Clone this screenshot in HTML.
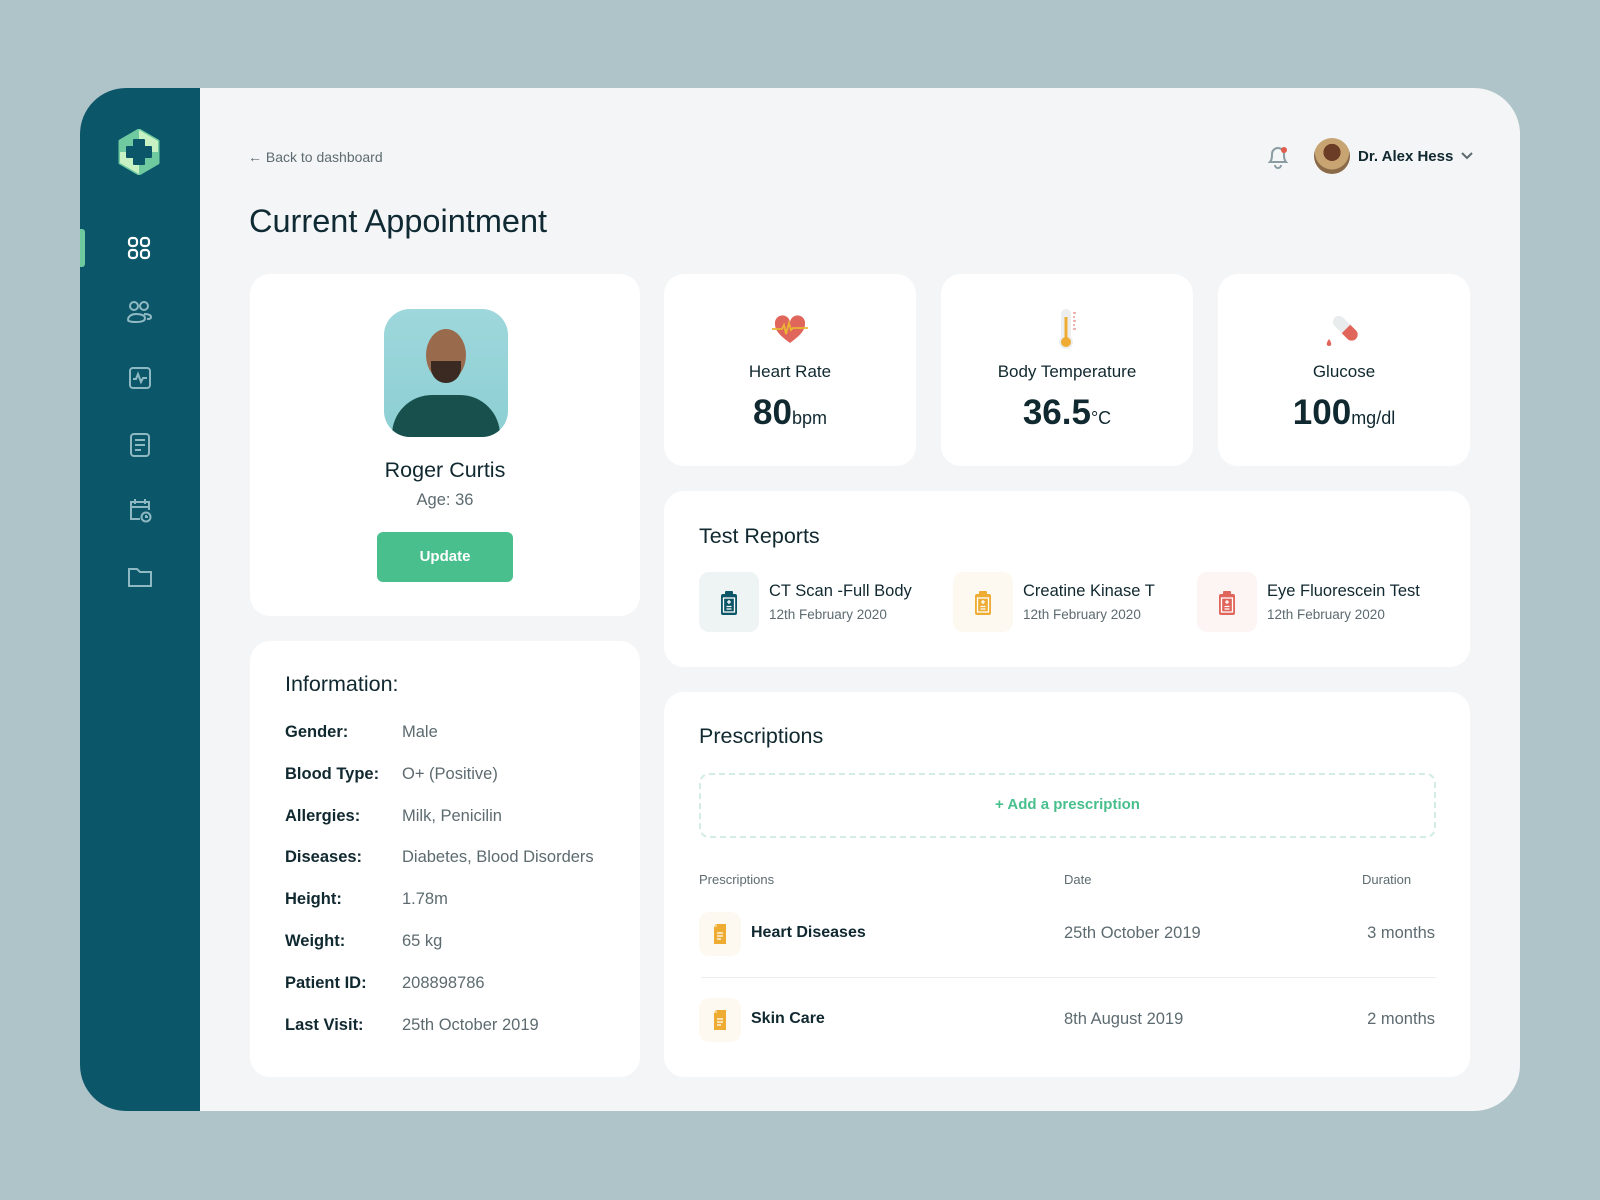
<!DOCTYPE html>
<html><head><meta charset="utf-8"><style>
*{margin:0;padding:0;box-sizing:border-box}
body{width:1600px;height:1200px;background:#afc4c8;font-family:"Liberation Sans",sans-serif;color:#10282f;position:relative;overflow:hidden}
.a{position:absolute}
.t{position:absolute;white-space:nowrap;line-height:1}
.frame{left:80px;top:88px;width:1440px;height:1023px;background:#f4f5f7;border-radius:46px;overflow:hidden}
.side{left:80px;top:88px;width:120px;height:1023px;background:#0c5669;border-radius:46px 0 0 46px}
.card{position:absolute;background:#fff;border-radius:20px}
.g{color:#5d6b70}
.b{font-weight:bold}
.ico{position:absolute;width:60px;height:60px;border-radius:10px}
</style></head><body>
<div class="a frame"></div>
<div class="a side"></div>
<svg class="a" style="left:116px;top:129px" width="46" height="46" viewBox="0 0 46 46">
<path d="M23 1 L42 12 L42 34 L23 45 L4 34 L4 12 Z" fill="#6fcaa0" stroke="#6fcaa0" stroke-width="3" stroke-linejoin="round"/>
<path d="M23 1 L42 12 L42 23 L23 23 Z" fill="#c8f1c4"/>
<path d="M4 23 L23 23 L23 45 L4 34 Z" fill="#c8f1c4"/>
<path d="M18 11h10v7h7v10h-7v7h-10v-7h-7v-10h7z" fill="#0c5669" stroke="#0c5669" stroke-width="2" stroke-linejoin="round"/>
</svg>
<div class="a" style="left:80px;top:229px;width:5px;height:38px;background:#6fcaa0;border-radius:0 3px 3px 0"></div>
<svg class="a" style="left:126px;top:236px" width="26" height="24" viewBox="0 0 26 24" fill="none" stroke="#fff" stroke-width="2.2"><rect x="3" y="2" width="8" height="8" rx="3"/><rect x="15" y="2" width="8" height="8" rx="3"/><rect x="3" y="14" width="8" height="8" rx="3"/><rect x="15" y="14" width="8" height="8" rx="3"/></svg>
<svg class="a" style="left:126px;top:300px" width="28" height="24" viewBox="0 0 28 24" fill="none" stroke="#8fb9c2" stroke-width="2"><circle cx="8" cy="6" r="4"/><circle cx="18" cy="6" r="4"/><path d="M2 20c0-4 4-6 8-6s9 1 9 4-3 4-9 4-8-1-8-2z"/><path d="M18 14c4 0 7 1 7 3s-2 2-4 2"/></svg>
<svg class="a" style="left:128px;top:366px" width="24" height="24" viewBox="0 0 24 24" fill="none" stroke="#8fb9c2" stroke-width="2"><rect x="2" y="2" width="20" height="20" rx="3"/><path d="M5 13h3l2-5 3 8 2-4h4"/></svg>
<svg class="a" style="left:129px;top:432px" width="22" height="26" viewBox="0 0 22 26" fill="none" stroke="#8fb9c2" stroke-width="2"><rect x="2" y="2" width="18" height="22" rx="3"/><path d="M6 8h10M6 13h10M6 18h6"/></svg>
<svg class="a" style="left:127px;top:497px" width="26" height="26" viewBox="0 0 26 26" fill="none" stroke="#8fb9c2" stroke-width="2"><path d="M13 22H4V5h18v8"/><path d="M4 10h18M8 2v5M18 2v5"/><circle cx="19" cy="20" r="4.5"/><path d="M19 18v2h2"/></svg>
<svg class="a" style="left:127px;top:565px" width="26" height="24" viewBox="0 0 26 24" fill="none" stroke="#8fb9c2" stroke-width="2"><path d="M2 4h8l3 3h11v14H2z"/></svg>

<div class="t g" style="left:248px;top:150px;font-size:14px">&#8592; Back to dashboard</div>
<div class="t" style="left:249px;top:205px;font-size:32.5px;color:#0f2a33">Current Appointment</div>

<svg class="a" style="left:1265px;top:143px" width="26" height="28" viewBox="0 0 26 28" fill="none" stroke="#8a9da2" stroke-width="2"><path d="M5 19c2-2 2-5 2-8a6 6 0 0 1 12 0c0 3 0 6 2 8z"/><path d="M10 22a3 3 0 0 0 6 0"/><circle cx="19" cy="7" r="3" fill="#e05c4d" stroke="none"/></svg>
<div class="a" style="left:1314px;top:138px;width:36px;height:36px;border-radius:50%;background:radial-gradient(circle at 50% 40%,#6b3d26 0 30%,#c7a472 31% 60%,#8b6a4a 61%)"></div>
<div class="t b" style="left:1358px;top:149px;font-size:15px">Dr. Alex Hess</div>
<svg class="a" style="left:1461px;top:152px" width="12" height="8" viewBox="0 0 12 8" fill="none" stroke="#5d6b70" stroke-width="2"><path d="M1 1l5 5 5-5"/></svg>

<div class="card" style="left:250px;top:274px;width:390px;height:342px"></div>
<div class="a" style="left:384px;top:309px;width:124px;height:128px;border-radius:26px;background:linear-gradient(#9ed7dc,#8ccfd3);overflow:hidden">
<div class="a" style="left:42px;top:20px;width:40px;height:52px;border-radius:50%;background:#9a6a4d"></div>
<div class="a" style="left:47px;top:52px;width:30px;height:22px;border-radius:0 0 15px 15px;background:#3a2a22"></div>
<div class="a" style="left:8px;top:86px;width:108px;height:60px;border-radius:40px 40px 0 0;background:#17504c"></div>
</div>
<div class="t" style="left:250px;width:390px;text-align:center;top:460px;font-size:21.5px">Roger Curtis</div>
<div class="t g" style="left:250px;width:390px;text-align:center;top:492px;font-size:16.5px">Age: 36</div>
<div class="a b" style="left:377px;top:532px;width:136px;height:50px;background:#48bf8c;border-radius:6px;color:#fff;font-size:15px;text-align:center;line-height:50px">Update</div>

<div class="card" style="left:250px;top:641px;width:390px;height:436px"></div>
<div class="t" style="left:285px;top:674px;font-size:21.5px">Information:</div>
<div style="position:absolute;left:285px;top:712px;font-size:16.5px;line-height:41.8px">
<div><span class="b" style="display:inline-block;width:117px">Gender:</span><span class="g">Male</span></div>
<div><span class="b" style="display:inline-block;width:117px">Blood Type:</span><span class="g">O+ (Positive)</span></div>
<div><span class="b" style="display:inline-block;width:117px">Allergies:</span><span class="g">Milk, Penicilin</span></div>
<div><span class="b" style="display:inline-block;width:117px">Diseases:</span><span class="g">Diabetes, Blood Disorders</span></div>
<div><span class="b" style="display:inline-block;width:117px">Height:</span><span class="g">1.78m</span></div>
<div><span class="b" style="display:inline-block;width:117px">Weight:</span><span class="g">65 kg</span></div>
<div><span class="b" style="display:inline-block;width:117px">Patient ID:</span><span class="g">208898786</span></div>
<div><span class="b" style="display:inline-block;width:117px">Last Visit:</span><span class="g">25th October 2019</span></div>
</div>

<div class="card" style="left:664px;top:274px;width:252px;height:192px"></div>
<div class="card" style="left:941px;top:274px;width:252px;height:192px"></div>
<div class="card" style="left:1218px;top:274px;width:252px;height:192px"></div>
<svg class="a" style="left:771px;top:313px" width="38" height="32" viewBox="0 0 38 32"><path d="M19 30C8 22 4 17 4 11a7.5 7.5 0 0 1 15-2 7.5 7.5 0 0 1 15 2c0 6-4 11-15 19z" fill="#e0655a"/><path d="M1 16h10l2-4 2 9 3-11 2 7 2-2h15" fill="none" stroke="#e9b534" stroke-width="1.8"/></svg>
<svg class="a" style="left:1055px;top:308px" width="24" height="42" viewBox="0 0 24 42"><rect x="6" y="1" width="10" height="32" rx="5" fill="#eceeef"/><circle cx="11" cy="34" r="7" fill="#eceeef"/><rect x="9.5" y="9" width="3" height="22" fill="#eeac33"/><circle cx="11" cy="34" r="5" fill="#eeac33"/><path d="M18 5h3M18 9h2M18 13h3M18 17h2M18 21h3" stroke="#e06a60" stroke-width="1"/></svg>
<svg class="a" style="left:1324px;top:311px" width="40" height="38" viewBox="0 0 40 38"><g transform="rotate(-45 22 18)"><rect x="16" y="2" width="12" height="30" rx="6" fill="#e9ecec"/><path d="M16 18h12v8a6 6 0 0 1-12 0z" fill="#e0655a"/></g><path d="M5 28c-3 4-3 7 0 7s3-3 0-7z" fill="#e0655a"/></svg>
<div class="t" style="left:664px;width:252px;text-align:center;top:363px;font-size:17px">Heart Rate</div>
<div class="t" style="left:941px;width:252px;text-align:center;top:363px;font-size:17px">Body Temperature</div>
<div class="t" style="left:1218px;width:252px;text-align:center;top:363px;font-size:17px">Glucose</div>
<div class="t b" style="left:664px;width:252px;text-align:center;top:395px;font-size:35px">80<span style="font-size:18px;font-weight:normal">bpm</span></div>
<div class="t b" style="left:941px;width:252px;text-align:center;top:395px;font-size:35px">36.5<span style="font-size:18px;font-weight:normal">°C</span></div>
<div class="t b" style="left:1218px;width:252px;text-align:center;top:395px;font-size:35px">100<span style="font-size:18px;font-weight:normal">mg/dl</span></div>

<div class="card" style="left:664px;top:491px;width:806px;height:176px"></div>
<div class="t" style="left:699px;top:526px;font-size:21.5px">Test Reports</div>
<div class="ico" style="left:699px;top:572px;background:#eef3f4"></div>
<div class="ico" style="left:953px;top:572px;background:#fdf9f1"></div>
<div class="ico" style="left:1197px;top:572px;background:#fcf5f4"></div>
<svg class="a" style="left:718px;top:590px" width="22" height="26" viewBox="0 0 22 26"><rect x="3" y="4" width="16" height="21" rx="2" fill="#0c5669"/><rect x="7" y="1" width="8" height="5" rx="1" fill="#0c5669"/><rect x="5.5" y="8" width="11" height="14" fill="none" stroke="#fff" stroke-width="1.3"/><path d="M11 10v4M9 12h4M8.5 16.5h5M8.5 19h5" stroke="#fff" stroke-width="1.3"/></svg>
<svg class="a" style="left:972px;top:590px" width="22" height="26" viewBox="0 0 22 26"><rect x="3" y="4" width="16" height="21" rx="2" fill="#eeac33"/><rect x="7" y="1" width="8" height="5" rx="1" fill="#eeac33"/><rect x="5.5" y="8" width="11" height="14" fill="none" stroke="#fff" stroke-width="1.3"/><path d="M11 10v4M9 12h4M8.5 16.5h5M8.5 19h5" stroke="#fff" stroke-width="1.3"/></svg>
<svg class="a" style="left:1216px;top:590px" width="22" height="26" viewBox="0 0 22 26"><rect x="3" y="4" width="16" height="21" rx="2" fill="#e0655a"/><rect x="7" y="1" width="8" height="5" rx="1" fill="#e0655a"/><rect x="5.5" y="8" width="11" height="14" fill="none" stroke="#fff" stroke-width="1.3"/><path d="M11 10v4M9 12h4M8.5 16.5h5M8.5 19h5" stroke="#fff" stroke-width="1.3"/></svg>
<div class="t" style="left:769px;top:583px;font-size:16.5px">CT Scan -Full Body</div>
<div class="t g" style="left:769px;top:608px;font-size:13.5px">12th February 2020</div>
<div class="t" style="left:1023px;top:583px;font-size:16.5px">Creatine Kinase T</div>
<div class="t g" style="left:1023px;top:608px;font-size:13.5px">12th February 2020</div>
<div class="t" style="left:1267px;top:583px;font-size:16.5px">Eye Fluorescein Test</div>
<div class="t g" style="left:1267px;top:608px;font-size:13.5px">12th February 2020</div>

<div class="card" style="left:664px;top:692px;width:806px;height:385px"></div>
<div class="t" style="left:699px;top:726px;font-size:21.5px">Prescriptions</div>
<div class="a" style="left:699px;top:773px;width:737px;height:65px;border:2px dashed #d3ece4;border-radius:10px"></div>
<div class="t b" style="left:699px;width:737px;text-align:center;top:797px;font-size:15px;color:#48bf8c">+ Add a prescription</div>
<div class="t g" style="left:699px;top:873px;font-size:13px">Prescriptions</div>
<div class="t g" style="left:1064px;top:873px;font-size:13px">Date</div>
<div class="t g" style="left:1362px;top:873px;font-size:13px">Duration</div>
<div class="ico" style="left:699px;top:912px;width:42px;height:44px;background:#fdf9f1"></div>
<div class="ico" style="left:699px;top:998px;width:42px;height:44px;background:#fdf9f1"></div>
<svg class="a" style="left:712px;top:923px" width="16" height="22" viewBox="0 0 16 22"><path d="M4 1h10v20H2V4z" fill="#eeac33"/><path d="M2 4h3V1z" fill="#f7d48a"/><path d="M5 10h6M5 13h6M5 16h4" stroke="#fff" stroke-width="1.2"/></svg>
<svg class="a" style="left:712px;top:1009px" width="16" height="22" viewBox="0 0 16 22"><path d="M4 1h10v20H2V4z" fill="#eeac33"/><path d="M2 4h3V1z" fill="#f7d48a"/><path d="M5 10h6M5 13h6M5 16h4" stroke="#fff" stroke-width="1.2"/></svg>
<div class="t b" style="left:751px;top:925px;font-size:16px">Heart Diseases</div>
<div class="t g" style="left:1064px;top:925px;font-size:16.5px">25th October 2019</div>
<div class="t g" style="right:165px;top:925px;font-size:16.5px">3 months</div>
<div class="a" style="left:701px;top:977px;width:735px;height:1px;background:#ebeeef"></div>
<div class="t b" style="left:751px;top:1011px;font-size:16px">Skin Care</div>
<div class="t g" style="left:1064px;top:1011px;font-size:16.5px">8th August 2019</div>
<div class="t g" style="right:165px;top:1011px;font-size:16.5px">2 months</div>
</body></html>
